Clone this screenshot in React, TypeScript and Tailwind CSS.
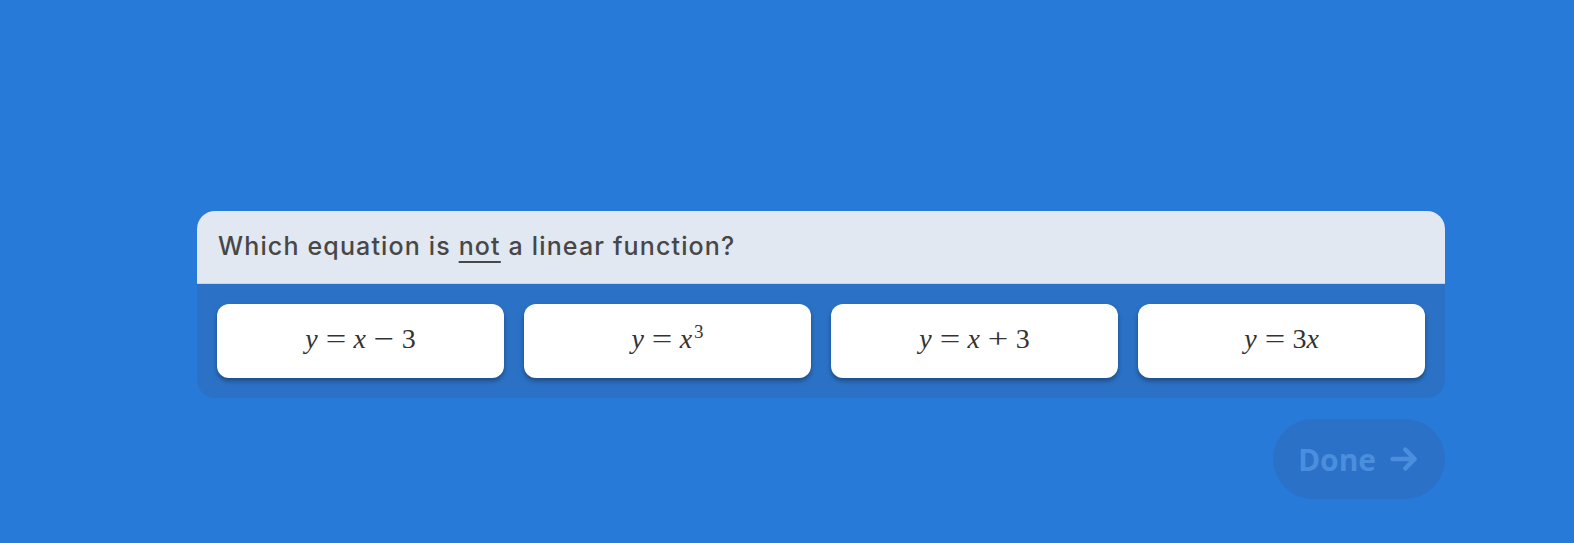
import React from 'react';

const V = ({ children }: { children: React.ReactNode }) => <span className="italic">{children}</span>;
const Op = ({ children }: { children: React.ReactNode }) => (
  <span className="inline-block scale-x-[1.3] mx-[10px]">{children}</span>
);

const choices: React.ReactNode[] = [
  <><V>y</V><Op>=</Op><V>x</V><Op>−</Op>3</>,
  <><V>y</V><Op>=</Op><V>x</V><sup className="text-[19px] relative -top-[7px] ml-[2px]">3</sup></>,
  <><V>y</V><Op>=</Op><V>x</V><Op>+</Op>3</>,
  <><V>y</V><Op>=</Op>3<V>x</V></>,
];

const ArrowRight = () => (
  <svg width="32" height="32" viewBox="0 0 24 24" fill="none" stroke="currentColor" strokeWidth="3.4" strokeLinecap="round" strokeLinejoin="round">
    <path d="M3.5 12h16" />
    <path d="M13 5l7 7-7 7" />
  </svg>
);

const App: React.FC = () => {
  return (
    <div className="min-h-[543px] w-full bg-[#287ad9] pt-[211px]" style={{ fontFamily: 'Inter, "Noto Sans", sans-serif' }}>
      <div className="ml-[197px] w-[1248px]">
        <div className="rounded-[18px] overflow-hidden bg-[#2b72c7]">
          <div className="h-[73px] bg-[#e1e8f1] border-b border-[#c9d3df] flex items-center px-[21px]">
            <p className="text-[25px] font-medium text-[#474747] tracking-[1.15px]">
              Which equation is <span className="underline underline-offset-[6px] decoration-[2px]">not</span> a linear function?
            </p>
          </div>
          <div className="grid grid-cols-4 gap-[20px] p-[20px]">
            {choices.map((c, i) => (
              <button
                key={i}
                className="h-[74px] rounded-[12px] bg-white shadow-[0_3px_5px_rgba(0,0,0,0.35)] flex items-center justify-center pb-[4px] text-[28px] text-[#333]"
                style={{ fontFamily: '"Liberation Serif", "DejaVu Serif", serif' }}
              >
                {c}
              </button>
            ))}
          </div>
        </div>
        <div className="flex justify-end mt-[21px]">
          <button className="h-[80px] w-[172px] rounded-full bg-[#2a71c7] flex items-center justify-center gap-[12px] text-[#4b8edd] text-[30px] font-bold" style={{ fontFamily: '"Open Sans", "Noto Sans", sans-serif' }}>
            Done
            <ArrowRight />
          </button>
        </div>
      </div>
    </div>
  );
};

export default App;
